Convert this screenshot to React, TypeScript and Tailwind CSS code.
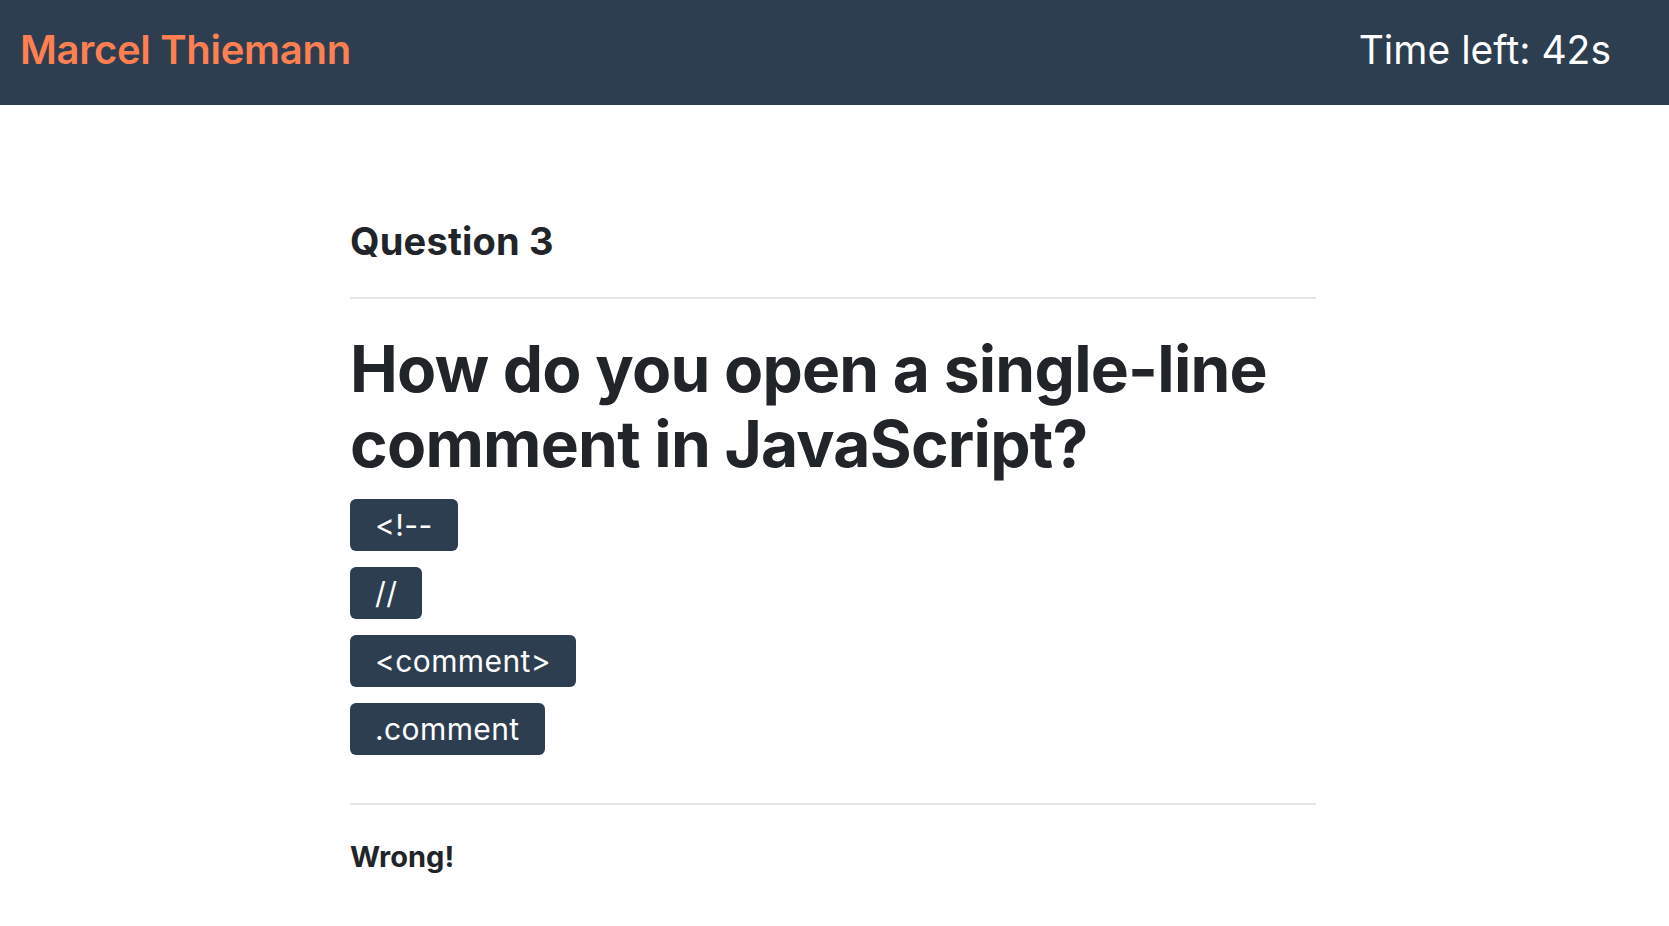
import React from "react";

const options = ["<!--", "//", "<comment>", ".comment"];

export default function App() {
  return (
    <div className="min-h-[926px] bg-white font-['Inter','Noto_Sans',sans-serif] text-[#212529]">
      <header className="flex h-[105px] items-center justify-between bg-[#2c3e50] pb-[6px] pl-[20px] pr-[58px]">
        <div className="text-[40px] font-semibold leading-none tracking-[-0.3px] text-[#ff7f50]">Marcel Thiemann</div>
        <div className="text-[39px] font-normal leading-none text-white">Time left: 42s</div>
      </header>
      <main className="ml-[350px] w-[966px] pt-[113px]">
        <h2 className="text-[38px] font-bold leading-[46px] tracking-[0.2px]">Question 3</h2>
        <hr className="mt-[33px] border-0 border-t-2 border-[#e6e6e6]" />
        <h1 className="mt-[32px] text-[64px] font-bold leading-[75px] tracking-[-0.75px]">
          How do you open a single-line comment in JavaScript?
        </h1>
        <div className="mt-[18px] flex flex-col items-start gap-[16px]">
          {options.map((o) => (
            <button
              key={o}
              className="flex h-[52px] items-center rounded-[6px] bg-[#2c3e50] px-[25px] text-[30px] font-normal leading-none tracking-[0.4px] text-white"
            >
              {o}
            </button>
          ))}
        </div>
        <hr className="mt-[48px] border-0 border-t-2 border-[#e6e6e6]" />
        <p className="mt-[34px] text-[29px] font-bold leading-[35px]">Wrong!</p>
      </main>
    </div>
  );
}
